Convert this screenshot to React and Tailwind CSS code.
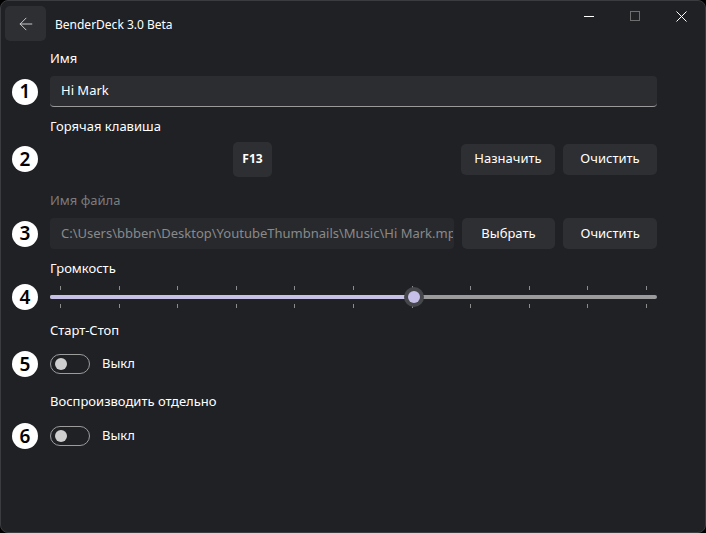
import React from 'react';
import { ArrowLeft } from 'lucide-react';

const font = { fontFamily: '"Noto Sans", "Open Sans", sans-serif' };

const Badge = ({ n }) => (
    <div className="w-[49px] flex justify-center shrink-0">
        <div className="w-[26px] h-[26px] rounded-full bg-white text-black flex items-center justify-center text-[19px] font-semibold leading-none ml-[-1px]">
            {n}
        </div>
    </div>
);

const Label = ({ children, muted, className = '' }) => (
    <div className={`pl-[49px] h-[20px] flex items-center text-[13px] ${muted ? 'text-[#7c7c7c]' : 'text-white'} ${className}`}>
        {children}
    </div>
);

const Button = ({ children }) => (
    <button className="w-[94px] h-[31px] rounded-[5px] bg-[#2d2f33] text-white text-[13px] flex items-center justify-center">
        {children}
    </button>
);

const Toggle = () => (
    <div className="flex items-center">
        <div className="w-[40px] h-[20px] rounded-full border border-[#9c9c9c] flex items-center pl-[4px]">
            <div className="w-[12px] h-[12px] rounded-full bg-[#cfcfcf]" />
        </div>
        <span className="ml-[12px] text-[13px] text-white">Выкл</span>
    </div>
);

const Ticks = () => (
    <div className="flex justify-between px-[10px]">
        {Array.from({ length: 11 }).map((_, i) => (
            <div key={i} className="w-px h-[4px] bg-[#8c8c8c]" />
        ))}
    </div>
);

const Slider = ({ value }) => {
    const pos = 10 + (590 * value) / 100;
    return (
        <div className="relative w-[607px] h-[28px] flex flex-col justify-between py-[3px]">
            <Ticks />
            <Ticks />
            <div className="absolute left-0 right-0 top-[12px] h-[4px] rounded-full bg-[#9b9b9b]">
                <div className="h-full rounded-full bg-[#c6c0e6]" style={{ width: pos }} />
            </div>
            <div
                className="absolute top-[4px] w-[20px] h-[20px] rounded-full bg-[#45474b] flex items-center justify-center"
                style={{ left: pos - 10 }}
            >
                <div className="w-[12px] h-[12px] rounded-full bg-[#c6c0e8]" />
            </div>
        </div>
    );
};

export default function App() {
    return (
        <div className="w-[706px] h-[533px] bg-black" style={font}>
            <div className="w-full h-full rounded-[8px] border border-[#3a3c3f] bg-[#1f2125] overflow-hidden flex flex-col">
                {/* title bar */}
                <div className="h-[48px] flex items-start shrink-0">
                    <button className="mt-[5px] ml-[4px] w-[41px] h-[35px] rounded-[5px] bg-[#2d2f33] flex items-center justify-center">
                        <ArrowLeft size={20} strokeWidth={1.1} color="#d8d8d8" />
                    </button>
                    <div className="ml-[9px] mt-[15px] text-[12px] text-white">BenderDeck 3.0 Beta</div>
                    <div className="ml-auto flex items-center h-[30px] mr-[1px]">
                        <div className="w-[46px] flex justify-center">
                            <div className="w-[10px] h-px bg-white" />
                        </div>
                        <div className="w-[46px] flex justify-center">
                            <div className="w-[10px] h-[10px] border border-[#6e6e6e]" />
                        </div>
                        <div className="w-[46px] flex justify-center">
                            <svg width="11" height="11" viewBox="0 0 11 11">
                                <path d="M0.5 0.5 L10.5 10.5 M10.5 0.5 L0.5 10.5" stroke="#ffffff" strokeWidth="1" />
                            </svg>
                        </div>
                    </div>
                </div>

                <Label>Имя</Label>
                <div className="flex items-center mt-[7px]">
                    <Badge n="1" />
                    <div className="w-[607px] h-[31px] rounded-[4px] bg-[#2b2d31] border-b border-[#9a9a9a] flex items-center px-[11px] text-[13px] text-white">
                        Hi Mark
                    </div>
                </div>

                <Label className="mt-[10px]">Горячая клавиша</Label>
                <div className="flex items-center mt-[4px] h-[36px]">
                    <Badge n="2" />
                    <div className="w-[607px] flex items-center">
                        <div className="ml-[183px] w-[39px] h-[35px] rounded-[5px] bg-[#2d2f33] flex items-center justify-center text-[12px] font-bold text-white">
                            F13
                        </div>
                        <div className="ml-auto flex gap-[8px]">
                            <Button>Назначить</Button>
                            <Button>Очистить</Button>
                        </div>
                    </div>
                </div>

                <Label muted className="mt-[14px]">Имя файла</Label>
                <div className="flex items-center mt-[7px]">
                    <Badge n="3" />
                    <div className="w-[607px] flex gap-[8px]">
                        <div className="w-[405px] h-[31px] rounded-[4px] bg-[#27292d] flex items-center pl-[11px] text-[13px] text-[#8a8a8a] overflow-hidden">
                            <span className="block overflow-hidden whitespace-nowrap w-[392px]">
                                C:\Users\bbben\Desktop\YoutubeThumbnails\Music\Hi Mark.mp3
                            </span>
                        </div>
                        <Button>Выбрать</Button>
                        <Button>Очистить</Button>
                    </div>
                </div>

                <Label className="mt-[10px]">Громкость</Label>
                <div className="flex items-center mt-[4px]">
                    <Badge n="4" />
                    <Slider value={60} />
                </div>

                <Label className="mt-[10px]">Старт-Стоп</Label>
                <div className="flex items-center mt-[8px] h-[30px]">
                    <Badge n="5" />
                    <Toggle />
                </div>

                <Label className="mt-[13px]">Воспроизводить отдельно</Label>
                <div className="flex items-center mt-[9px] h-[30px]">
                    <Badge n="6" />
                    <Toggle />
                </div>
            </div>
        </div>
    );
}
